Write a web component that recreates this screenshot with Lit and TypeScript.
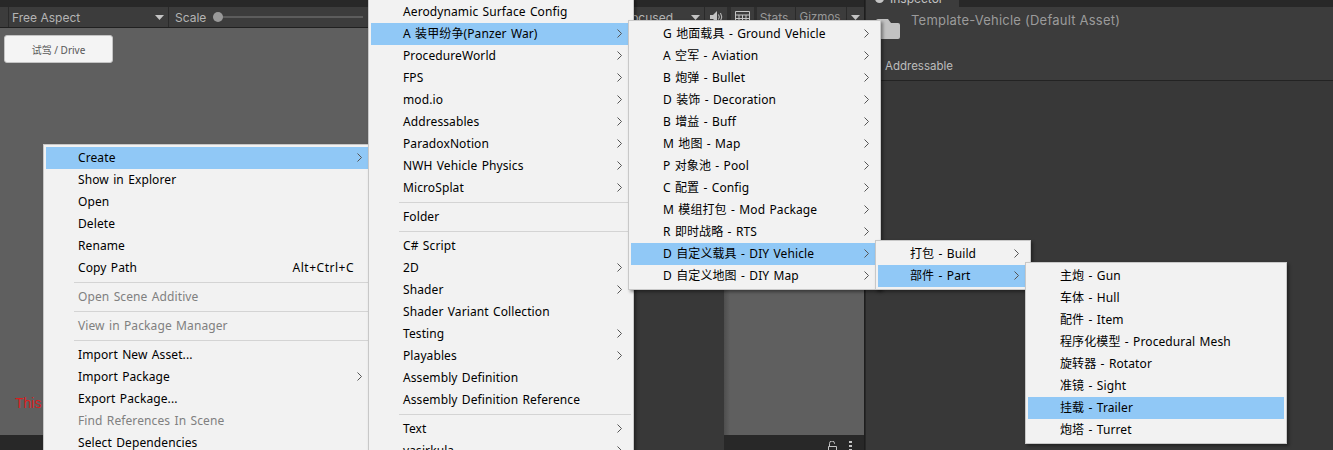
import { LitElement, html, css, svg } from 'lit';
import { customElement } from 'lit/decorators.js';

// "-" is a separator, ">" at the end opens a submenu, "~" in front is a disabled item
type Menu = { x: number; y: number; w: number; items: string[] };

const menus: Menu[] = [
  {
    x: 43, y: 144, w: 331,
    items: ['*Create>', 'Show in Explorer', 'Open', 'Delete', 'Rename', 'Copy Path|Alt+Ctrl+C', '-', '~Open Scene Additive', '-',
      '~View in Package Manager', '-', 'Import New Asset...', 'Import Package>', 'Export Package...', '~Find References In Scene', 'Select Dependencies'],
  },
  {
    x: 368, y: -2, w: 266,
    items: ['Aerodynamic Surface Config', '*A 装甲纷争(Panzer War)>', 'ProcedureWorld>', 'FPS>', 'mod.io>', 'Addressables>', 'ParadoxNotion>',
      'NWH Vehicle Physics>', 'MicroSplat>', '-', 'Folder', '-', 'C# Script', '2D>', 'Shader>', 'Shader Variant Collection', 'Testing>', 'Playables>',
      'Assembly Definition', 'Assembly Definition Reference', '-', 'Text>', 'yasirkula>'],
  },
  {
    x: 628, y: 20, w: 253,
    items: ['G 地面载具 - Ground Vehicle>', 'A 空军 - Aviation>', 'B 炮弹 - Bullet>', 'D 装饰 - Decoration>', 'B 增益 - Buff>', 'M 地图 - Map>',
      'P 对象池 - Pool>', 'C 配置 - Config>', 'M 模组打包 - Mod Package>', 'R 即时战略 - RTS>', '*D 自定义载具 - DIY Vehicle>', 'D 自定义地图 - DIY Map>'],
  },
  { x: 875, y: 240, w: 156, items: ['打包 - Build>', '*部件 - Part>'] },
  {
    x: 1025, y: 262, w: 262,
    items: ['主炮 - Gun', '车体 - Hull', '配件 - Item', '程序化模型 - Procedural Mesh', '旋转器 - Rotator', '准镜 - Sight', '*挂载 - Trailer', '炮塔 - Turret'],
  },
];

const chevron = svg`<svg class="chev" width="5" height="9" viewBox="0 0 5 9"><path d="M.5.5l4 4-4 4" fill="none" stroke="#555" stroke-width="1"/></svg>`;
const arrow = html`<svg width="9" height="5" viewBox="0 0 9 5"><path d="M0 0h9L4.5 5z" fill="#c4c4c4"/></svg>`;

@customElement('app-root')
export class AppRoot extends LitElement {
  static styles = css`
    :host {
      display: block;
      position: relative;
      width: 1333px;
      height: 450px;
      overflow: hidden;
      background: #282828;
      font-family: "Noto Sans", "Noto Sans CJK SC", sans-serif;
      font-size: 12px;
    }
    .editor { display: flex; height: 450px; }

    .game { width: 864px; display: flex; flex-direction: column; border-right: 1px solid #1e1e1e; box-sizing: content-box; }
    .strip { height: 7px; flex: none; background: #282828; }
    .toolbar {
      height: 20px; flex: none; display: flex; align-items: center;
      background: #3c3c3c; border-bottom: 1px solid #202020;
      color: #b4b4b4; font-family: Inter, sans-serif; font-size: 12px;
    }
    .cell { height: 100%; display: flex; align-items: center; justify-content: space-between; border-right: 1px solid #2a2a2a; box-sizing: border-box; flex: none; }
    .c0 { width: 9px; }
    .c1 { width: 160px; padding: 0 4px 0 3px; }
    .c2 { width: 200px; padding-left: 6px; gap: 7px; justify-content: flex-start; border: 0; }
    .slider { display: flex; align-items: center; width: 150px; position: relative; height: 2px; background: #5c5c5c; flex: none; }
    .slider i { width: 10px; height: 10px; border-radius: 50%; background: #999; position: absolute; left: 0; top: -4px; }
    .gap { flex: 1; }
    .c3 { width: 88px; padding: 0 4px 0 0; justify-content: flex-end; gap: 18px; }
    .c4 { width: 22px; justify-content: center; border-right: 4px solid #2e2e2e; box-sizing: content-box; }
    .c5 { width: 23px; justify-content: center; border-right: 3px solid #2e2e2e; box-sizing: content-box; }
    .c6 { width: 39px; justify-content: center; color: #999; padding-right: 4px; }
    .c7 { width: 51px; justify-content: center; color: #999; padding-right: 2px; font-size: 11.5px; }
    .c8 { width: 17px; justify-content: center; border: 0; }

    .body { flex: 1; display: flex; min-height: 0; }
    .scene { display: flex; flex-direction: column; }
    .scene.left { width: 634px; }
    .scene.right { width: 140px; }
    .view { flex: 1; background: #5f5f5f; position: relative; }
    .scene.right .view { background: linear-gradient(90deg, #4e4e4e, #5f5f5f 6px); }
    .foot { height: 15px; flex: none; background: #282828; display: flex; justify-content: flex-end; align-items: flex-start; gap: 12px; padding: 6px 12px 0 0; box-sizing: border-box; }
    .scene.right .foot { border-radius: 4px 4px 0 0; }
    .side { width: 90px; background: #383838; }
    .drive {
      position: absolute; left: 4px; top: 7px; width: 109px; height: 28px; box-sizing: border-box;
      background: #f4f4f4; border: 1px solid #c4c4c4; border-radius: 3px;
      display: flex; align-items: center; justify-content: center;
      color: #585858; font-size: 10px;
    }
    .warn { position: absolute; left: 15px; top: 367px; color: #d81e1e; font: 14px "Liberation Sans", sans-serif; }

    .inspector { flex: 1; display: flex; flex-direction: column; margin-left: 1px; background: #383838; font-family: Inter, sans-serif; }
    .tabs { height: 7px; background: #282828; flex: none; }
    .tab { width: 93px; height: 7px; background: #3c3c3c; overflow: hidden; color: #c4c4c4; line-height: 1; padding-left: 9px; box-sizing: border-box; display: flex; gap: 6px; }
    .tab svg { margin-top: -6px; flex: none; }
    .tab span { display: block; margin-top: -7px; }
    .header { height: 74px; flex: none; background: #3c3c3c; border-bottom: 1px solid #232323; box-sizing: border-box; position: relative; }
    .title { padding: 5px 0 0 45px; font-size: 13px; color: #9b9b9b; letter-spacing: .22px; }
    .folder { position: absolute; left: 10px; top: 11px; }
    .addr { position: absolute; left: 19px; top: 52px; color: #bdbdbd; font-size: 11.5px; }

    .menu {
      position: absolute; box-sizing: border-box;
      background: #f2f2f2; border: 1px solid #c8c8c8; padding: 2px;
      box-shadow: 2px 2px 3px rgba(0, 0, 0, .4);
      color: #000;
      letter-spacing: .1px;
      word-spacing: 1.1px;
    }
    .row { height: 22px; display: flex; align-items: center; padding: 0 0 2px 32px; box-sizing: border-box; white-space: nowrap; }
    .row.on { background: #90c8f6; }
    .row.off { color: #808080; }
    .row .txt { flex: 1; }
    .row .key { margin-right: 17px; letter-spacing: .5px; }
    .chev { margin-right: 9px; flex: none; }
    .sep { height: 7px; padding: 3px 0 3px 28px; box-sizing: border-box; }
    .sep i { display: block; height: 1px; background: #d4d4d4; }
  `;

  private renderRow(item: string) {
    if (item === '-') return html`<div class="sep"><i></i></div>`;
    const on = item.startsWith('*');
    const off = item.startsWith('~');
    const sub = item.endsWith('>');
    const [label, key] = item.replace(/^[*~]/, '').replace(/>$/, '').split('|');
    return html`<div class="row ${on ? 'on' : ''} ${off ? 'off' : ''}">
      <span class="txt">${label}</span>
      ${key ? html`<span class="key">${key}</span>` : ''}
      ${sub ? chevron : ''}
    </div>`;
  }

  render() {
    return html`
      <div class="editor">
        <div class="game">
          <div class="strip"></div>
          <div class="toolbar">
            <div class="cell c0"></div>
            <div class="cell c1"><span>Free Aspect</span>${arrow}</div>
            <div class="cell c2"><span>Scale</span><div class="slider"><i></i></div></div>
            <div class="gap"></div>
            <div class="cell c3"><span>Focused</span>${arrow}</div>
            <div class="cell c4">
              <svg width="13" height="12" viewBox="0 0 13 12"><path d="M0 4h3l4-4v12L3 8H0z" fill="#c4c4c4"/><path d="M8.500 3.500q1.600 2.500 0 5M10.500 2q2.600 4 0 8" fill="none" stroke="#c4c4c4"/></svg>
            </div>
            <div class="cell c5">
              <svg width="15" height="12" viewBox="0 0 15 12"><path d="M.5.5h14v11H.5zM.5 4h14M.5 7.500h14M4 4v7.500M7.500 4v7.500M11 4v7.500" fill="none" stroke="#c4c4c4"/></svg>
            </div>
            <div class="cell c6"><span>Stats</span></div>
            <div class="cell c7"><span>Gizmos</span></div>
            <div class="cell c8">${arrow}</div>
          </div>
          <div class="body">
            <div class="scene left">
              <div class="view">
                <div class="drive">试驾 / Drive</div>
                <div class="warn">This</div>
              </div>
              <div class="foot"></div>
            </div>
            <div class="side"></div>
            <div class="scene right">
              <div class="view"></div>
              <div class="foot">
                <svg width="9" height="10" viewBox="0 0 9 10"><path d="M1.500 5V2.500a2.500 2.500 0 0 1 5 0V3M.5 5.500h8v5h-8z" fill="none" stroke="#c4c4c4"/></svg>
                <svg width="3" height="10" viewBox="0 0 3 10"><path d="M0 0h3v2H0zM0 4h3v2H0zM0 8h3v2H0z" fill="#c4c4c4"/></svg>
              </div>
            </div>
          </div>
        </div>
        <div class="inspector">
          <div class="tabs"><div class="tab">
            <svg width="9" height="9" viewBox="0 0 9 9"><circle cx="4.500" cy="4.500" r="4.500" fill="#c4c4c4"/></svg>
            <span>Inspector</span>
          </div></div>
          <div class="header">
            <svg class="folder" width="24" height="21" viewBox="0 0 24 21"><path d="M2 1h10l3 4h7a2 2 0 0 1 2 2v12a2 2 0 0 1-2 2H2a2 2 0 0 1-2-2V3a2 2 0 0 1 2-2z" fill="#c2c2c2"/></svg>
            <div class="title">Template-Vehicle (Default Asset)</div>
            <div class="addr">Addressable</div>
          </div>
        </div>
      </div>
      ${menus.map(
        (m) => html`<div class="menu" style="left:${m.x}px;top:${m.y}px;width:${m.w}px">${m.items.map((i) => this.renderRow(i))}</div>`
      )}
    `;
  }
}
